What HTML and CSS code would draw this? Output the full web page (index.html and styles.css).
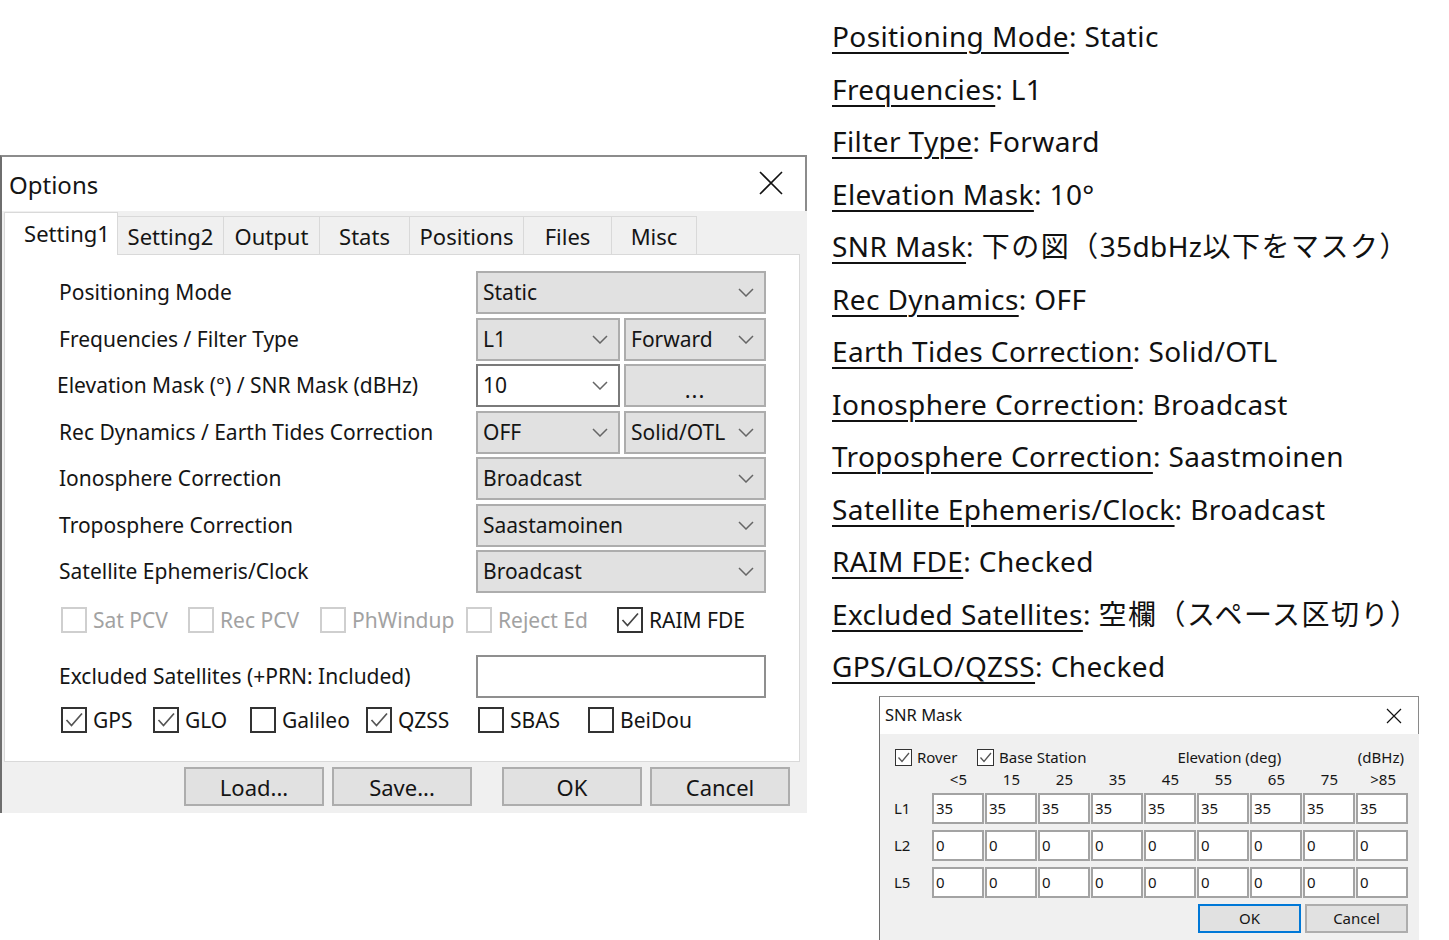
FILE: index.html
```html
<!DOCTYPE html>
<html lang="ja">
<head>
<meta charset="utf-8">
<title>Options</title>
<link rel="stylesheet" href="styles.css">
</head>
<body>
<div class="canvas">

  <div class="win options">
    <div class="titlebar">
      <span class="title">Options</span>
      <svg class="close" width="24" height="24" viewBox="0 0 24 24"><path d="M1 1 L23 23 M23 1 L1 23" stroke="#111" stroke-width="1.6" fill="none"/></svg>
    </div>
    <div class="body">
      <div class="tabs">
        <div class="tab active t1">Setting1</div>
        <div class="tab t2">Setting2</div>
        <div class="tab t3">Output</div>
        <div class="tab t4">Stats</div>
        <div class="tab t5">Positions</div>
        <div class="tab t6">Files</div>
        <div class="tab t7">Misc</div>
      </div>
      <div class="panel">
        <div class="form">
          <div class="row">
            <span class="lbl">Positioning Mode</span>
            <div class="dd"><span>Static</span><svg class="chev" width="16" height="9" viewBox="0 0 16 9"><path d="M1 1 L8 8 L15 1" fill="none" stroke="#666" stroke-width="1.5"/></svg></div>
          </div>
          <div class="row">
            <span class="lbl">Frequencies / Filter Type</span>
            <div class="split">
              <div class="dd"><span>L1</span><svg class="chev" width="16" height="9" viewBox="0 0 16 9"><path d="M1 1 L8 8 L15 1" fill="none" stroke="#666" stroke-width="1.5"/></svg></div>
              <div class="dd"><span>Forward</span><svg class="chev" width="16" height="9" viewBox="0 0 16 9"><path d="M1 1 L8 8 L15 1" fill="none" stroke="#666" stroke-width="1.5"/></svg></div>
            </div>
          </div>
          <div class="row">
            <span class="lbl lbl-elev">Elevation Mask (°) / SNR Mask (dBHz)</span>
            <div class="split">
              <div class="dd dd-white"><span>10</span><svg class="chev" width="16" height="9" viewBox="0 0 16 9"><path d="M1 1 L8 8 L15 1" fill="none" stroke="#666" stroke-width="1.5"/></svg></div>
              <div class="btn btn-dots">...</div>
            </div>
          </div>
          <div class="row">
            <span class="lbl">Rec Dynamics / Earth Tides Correction</span>
            <div class="split">
              <div class="dd"><span>OFF</span><svg class="chev" width="16" height="9" viewBox="0 0 16 9"><path d="M1 1 L8 8 L15 1" fill="none" stroke="#666" stroke-width="1.5"/></svg></div>
              <div class="dd"><span>Solid/OTL</span><svg class="chev" width="16" height="9" viewBox="0 0 16 9"><path d="M1 1 L8 8 L15 1" fill="none" stroke="#666" stroke-width="1.5"/></svg></div>
            </div>
          </div>
          <div class="row">
            <span class="lbl">Ionosphere Correction</span>
            <div class="dd"><span>Broadcast</span><svg class="chev" width="16" height="9" viewBox="0 0 16 9"><path d="M1 1 L8 8 L15 1" fill="none" stroke="#666" stroke-width="1.5"/></svg></div>
          </div>
          <div class="row">
            <span class="lbl">Troposphere Correction</span>
            <div class="dd"><span>Saastamoinen</span><svg class="chev" width="16" height="9" viewBox="0 0 16 9"><path d="M1 1 L8 8 L15 1" fill="none" stroke="#666" stroke-width="1.5"/></svg></div>
          </div>
          <div class="row">
            <span class="lbl">Satellite Ephemeris/Clock</span>
            <div class="dd"><span>Broadcast</span><svg class="chev" width="16" height="9" viewBox="0 0 16 9"><path d="M1 1 L8 8 L15 1" fill="none" stroke="#666" stroke-width="1.5"/></svg></div>
          </div>
        </div>

        <div class="checks checks1">
          <label class="cb disabled"><span class="box"></span>Sat PCV</label>
          <label class="cb disabled"><span class="box"></span>Rec PCV</label>
          <label class="cb disabled"><span class="box"></span>PhWindup</label>
          <label class="cb disabled"><span class="box"></span>Reject Ed</label>
          <label class="cb"><span class="box"><svg width="22" height="22" viewBox="0 0 22 22"><path d="M3.5 11 L8.5 16.5 L19 4.5" fill="none" stroke="#444" stroke-width="1.7"/></svg></span>RAIM FDE</label>
        </div>

        <div class="row excl">
          <span class="lbl">Excluded Satellites (+PRN: Included)</span>
          <div class="input"></div>
        </div>

        <div class="checks checks2">
          <label class="cb"><span class="box"><svg width="22" height="22" viewBox="0 0 22 22"><path d="M3.5 11 L8.5 16.5 L19 4.5" fill="none" stroke="#555" stroke-width="1.7"/></svg></span>GPS</label>
          <label class="cb"><span class="box"><svg width="22" height="22" viewBox="0 0 22 22"><path d="M3.5 11 L8.5 16.5 L19 4.5" fill="none" stroke="#555" stroke-width="1.7"/></svg></span>GLO</label>
          <label class="cb"><span class="box"></span>Galileo</label>
          <label class="cb"><span class="box"><svg width="22" height="22" viewBox="0 0 22 22"><path d="M3.5 11 L8.5 16.5 L19 4.5" fill="none" stroke="#555" stroke-width="1.7"/></svg></span>QZSS</label>
          <label class="cb"><span class="box"></span>SBAS</label>
          <label class="cb"><span class="box"></span>BeiDou</label>
        </div>
      </div>
    </div>
    <div class="btnbar">
      <div class="btn pbtn">Load...</div>
      <div class="btn pbtn">Save...</div>
      <div class="btn pbtn ok">OK</div>
      <div class="btn pbtn">Cancel</div>
    </div>
  </div>

  <ul class="notes">
    <li><u>Positioning Mode</u>: Static</li>
    <li><u>Frequencies</u>: L1</li>
    <li><u>Filter Type</u>: Forward</li>
    <li><u>Elevation Mask</u>: 10°</li>
    <li><u>SNR Mask</u>: <span class="jp">下の図（</span>35dbHz<span class="jp">以下をマスク）</span></li>
    <li><u>Rec Dynamics</u>: OFF</li>
    <li><u>Earth Tides Correction</u>: Solid/OTL</li>
    <li><u>Ionosphere Correction</u>: Broadcast</li>
    <li><u>Troposphere Correction</u>: Saastmoinen</li>
    <li><u>Satellite Ephemeris/Clock</u>: Broadcast</li>
    <li><u>RAIM FDE</u>: Checked</li>
    <li><u>Excluded Satellites</u>: <span class="jp">空欄（スペース区切り）</span></li>
    <li><u>GPS/GLO/QZSS</u>: Checked</li>
  </ul>

  <div class="win snr">
    <div class="titlebar s-title">
      <span class="title">SNR Mask</span>
      <svg class="close" width="16" height="16" viewBox="0 0 16 16"><path d="M1 1 L15 15 M15 1 L1 15" stroke="#111" stroke-width="1.2" fill="none"/></svg>
    </div>
    <div class="s-body">
      <div class="s-top">
        <label class="scb"><span class="sbox"><svg width="15" height="15" viewBox="0 0 15 15"><path d="M2.5 7.5 L6 11.5 L13 3" fill="none" stroke="#555" stroke-width="1.3"/></svg></span>Rover</label>
        <label class="scb"><span class="sbox"><svg width="15" height="15" viewBox="0 0 15 15"><path d="M2.5 7.5 L6 11.5 L13 3" fill="none" stroke="#555" stroke-width="1.3"/></svg></span>Base Station</label>
        <span class="elev">Elevation (deg)</span>
        <span class="unit">(dBHz)</span>
      </div>
      <div class="grid">
        <span></span>
        <span class="hd">&lt;5</span><span class="hd">15</span><span class="hd">25</span><span class="hd">35</span><span class="hd">45</span><span class="hd">55</span><span class="hd">65</span><span class="hd">75</span><span class="hd hd-last">&gt;85</span>

        <span class="rl">L1</span>
        <span class="cell">35</span><span class="cell">35</span><span class="cell">35</span><span class="cell">35</span><span class="cell">35</span><span class="cell">35</span><span class="cell">35</span><span class="cell">35</span><span class="cell">35</span>

        <span class="rl">L2</span>
        <span class="cell">0</span><span class="cell">0</span><span class="cell">0</span><span class="cell">0</span><span class="cell">0</span><span class="cell">0</span><span class="cell">0</span><span class="cell">0</span><span class="cell">0</span>

        <span class="rl">L5</span>
        <span class="cell">0</span><span class="cell">0</span><span class="cell">0</span><span class="cell">0</span><span class="cell">0</span><span class="cell">0</span><span class="cell">0</span><span class="cell">0</span><span class="cell">0</span>
      </div>
      <div class="s-btns">
        <div class="sbtn default">OK</div>
        <div class="sbtn">Cancel</div>
      </div>
    </div>
  </div>

</div>
</body>
</html>
```

FILE: styles.css
```css
* { box-sizing: border-box; }
html, body { margin: 0; padding: 0; background: #fff; }

.canvas {
  position: relative;
  width: 1449px;
  height: 940px;
  overflow: hidden;
}

/* ---------- Options window ---------- */
.win { position: absolute; }

.options {
  left: 0;
  top: 155px;
  width: 807px;
  height: 658px;
  background: #f0f0f0;
  border-top: 2px solid #8c8c8c;
  border-left: 2px solid #6e6e6e;
  font-family: "Noto Sans", "Open Sans", sans-serif;
  color: #151515;
  display: flex;
  flex-direction: column;
}

.titlebar {
  height: 54px;
  background: #fff;
  border-right: 2px solid #8c8c8c;
  display: flex;
  align-items: center;
  justify-content: space-between;
  padding: 0 22px 0 7px;
}
.options .title { font-size: 24px; line-height: 1; margin-top: 2px; }
.options .close { margin-top: -2px; }

.body {
  padding: 0 5px 0 2px;
  display: flex;
  flex-direction: column;
}

.tabs {
  height: 43px;
  display: flex;
  align-items: flex-end;
  position: relative;
  z-index: 2;
}
.tab {
  height: 38px;
  border: 1px solid #d9d9d9;
  border-bottom: none;
  background: #f0f0f0;
  font-size: 22px;
  display: flex;
  align-items: center;
  justify-content: center;
  margin-left: -1px;
  line-height: 1;
}
.tab.active {
  height: 43px;
  background: #fff;
  margin-left: 0;
  margin-bottom: -1px;
  padding-left: 12px;
  padding-bottom: 3px;
}
.t1 { width: 114px; }
.t2 { width: 107px; }
.t3 { width: 97px; }
.t4 { width: 91px; }
.t5 { width: 115px; }
.t6 { width: 89px; }
.t7 { width: 86px; }

.panel {
  width: 796px;
  height: 508px;
  background: #fff;
  border: 1px solid #d9d9d9;
  padding: 16px 0 0 54px;
}

.form {
  display: flex;
  flex-direction: column;
  gap: 3.5px;
}
.row {
  display: grid;
  grid-template-columns: 417px 290px;
  height: 43px;
  align-items: center;
}
.lbl { font-size: 21px; line-height: 1; white-space: nowrap; }
.lbl-elev { margin-left: -2px; }

.split {
  display: grid;
  grid-template-columns: 144px 142px;
  gap: 4px;
  height: 43px;
}

.dd {
  height: 43px;
  background: #e1e1e1;
  border: 2px solid #adadad;
  display: flex;
  align-items: center;
  justify-content: space-between;
  padding: 0 10px 0 5px;
  font-size: 21px;
  line-height: 1;
}
.dd-white {
  background: #fff;
  border-color: #7a7a7a;
}

.btn {
  background: #e1e1e1;
  border: 2px solid #adadad;
  display: flex;
  align-items: center;
  justify-content: center;
  font-size: 22px;
  line-height: 1;
}
.btn-dots { height: 43px; padding-top: 6px; letter-spacing: 1px; }

/* checkboxes */
.checks {
  display: grid;
  height: 26px;
  align-items: center;
  padding-left: 2px;
}
.checks1 {
  margin-top: 14px;
  grid-template-columns: 127px 132px 146px 151px auto;
}
.checks2 {
  margin-top: 9px;
  grid-template-columns: 92px 97px 116px 112px 110px auto;
}
.cb {
  display: flex;
  align-items: center;
  gap: 6px;
  font-size: 21px;
  line-height: 1;
  white-space: nowrap;
}
.box {
  width: 26px;
  height: 26px;
  border: 2px solid #333;
  background: #fff;
  display: flex;
  align-items: center;
  justify-content: center;
  flex: none;
}
.cb.disabled { color: #a2a2a2; }
.cb.disabled .box { border-color: #cfcfcf; }

.excl { margin-top: 22px; }
.input {
  height: 43px;
  background: #fff;
  border: 2px solid #8f8f8f;
}

.btnbar {
  height: 49px;
  display: flex;
  justify-content: flex-end;
  padding: 5px 17px 0 0;
  gap: 8px;
}
.pbtn { width: 140px; height: 39px; }
.pbtn.ok { margin-left: 22px; }

/* ---------- notes ---------- */
.notes {
  position: absolute;
  left: 832px;
  top: 10px;
  margin: 0;
  padding: 0;
  list-style: none;
  font-family: "Noto Sans", "Noto Sans CJK JP", sans-serif;
  font-size: 28px;
  letter-spacing: 0.4px;
  color: #111;
}
.notes li {
  height: 52.5px;
  line-height: 52.5px;
  white-space: nowrap;
}
.notes .jp { letter-spacing: 1.5px; }
.notes u {
  text-decoration: underline;
  text-decoration-thickness: 2px;
  text-underline-offset: 5px;
}

/* ---------- SNR mask window ---------- */
.snr {
  left: 879px;
  top: 696px;
  width: 540px;
  height: 250px;
  background: #f0f0f0;
  border-top: 1px solid #8a8a8a;
  border-left: 1px solid #6e6e6e;
  font-family: "Noto Sans", "Open Sans", sans-serif;
  color: #161616;
}
.s-title {
  height: 37px;
  border-right: 1px solid #8a8a8a;
  padding: 0 16px 0 5px;
}
.snr .title { font-size: 16.5px; line-height: 1; }

.s-body {
  padding: 14px 11px 0 13px;
  display: flex;
  flex-direction: column;
}
.s-top {
  display: flex;
  align-items: center;
  height: 18px;
  font-size: 15px;
  line-height: 1;
  white-space: nowrap;
}
.scb {
  display: flex;
  align-items: center;
  gap: 5px;
}
.scb:first-child { margin-left: 2px; width: 82px; }
.sbox {
  width: 17px;
  height: 17px;
  border: 1px solid #333;
  background: #fff;
  display: flex;
  align-items: center;
  justify-content: center;
}
.elev { margin-left: 91px; }
.unit { margin-left: auto; margin-right: 4px; }

.grid {
  display: grid;
  grid-template-columns: 38px repeat(9, 52px);
  grid-template-rows: 18px 31px 31px 31px;
  column-gap: 1px;
  row-gap: 6px;
  margin-top: 3px;
  font-size: 15px;
  line-height: 1;
}
.hd {
  text-align: right;
  padding-right: 17px;
  align-self: end;
  margin-bottom: 0;
}
.hd-last { padding-right: 12px; }
.rl {
  align-self: center;
  padding-left: 1px;
}
.cell {
  background: #fff;
  border: 2px solid #a3a3a3;
  display: flex;
  align-items: center;
  padding-left: 2px;
}

.s-btns {
  display: flex;
  justify-content: flex-end;
  gap: 4px;
  margin-top: 6px;
}
.sbtn {
  width: 103px;
  height: 29px;
  background: #e1e1e1;
  border: 2px solid #adadad;
  display: flex;
  align-items: center;
  justify-content: center;
  font-size: 15px;
  line-height: 1;
}
.sbtn.default { border-color: #0078d7; }
```
